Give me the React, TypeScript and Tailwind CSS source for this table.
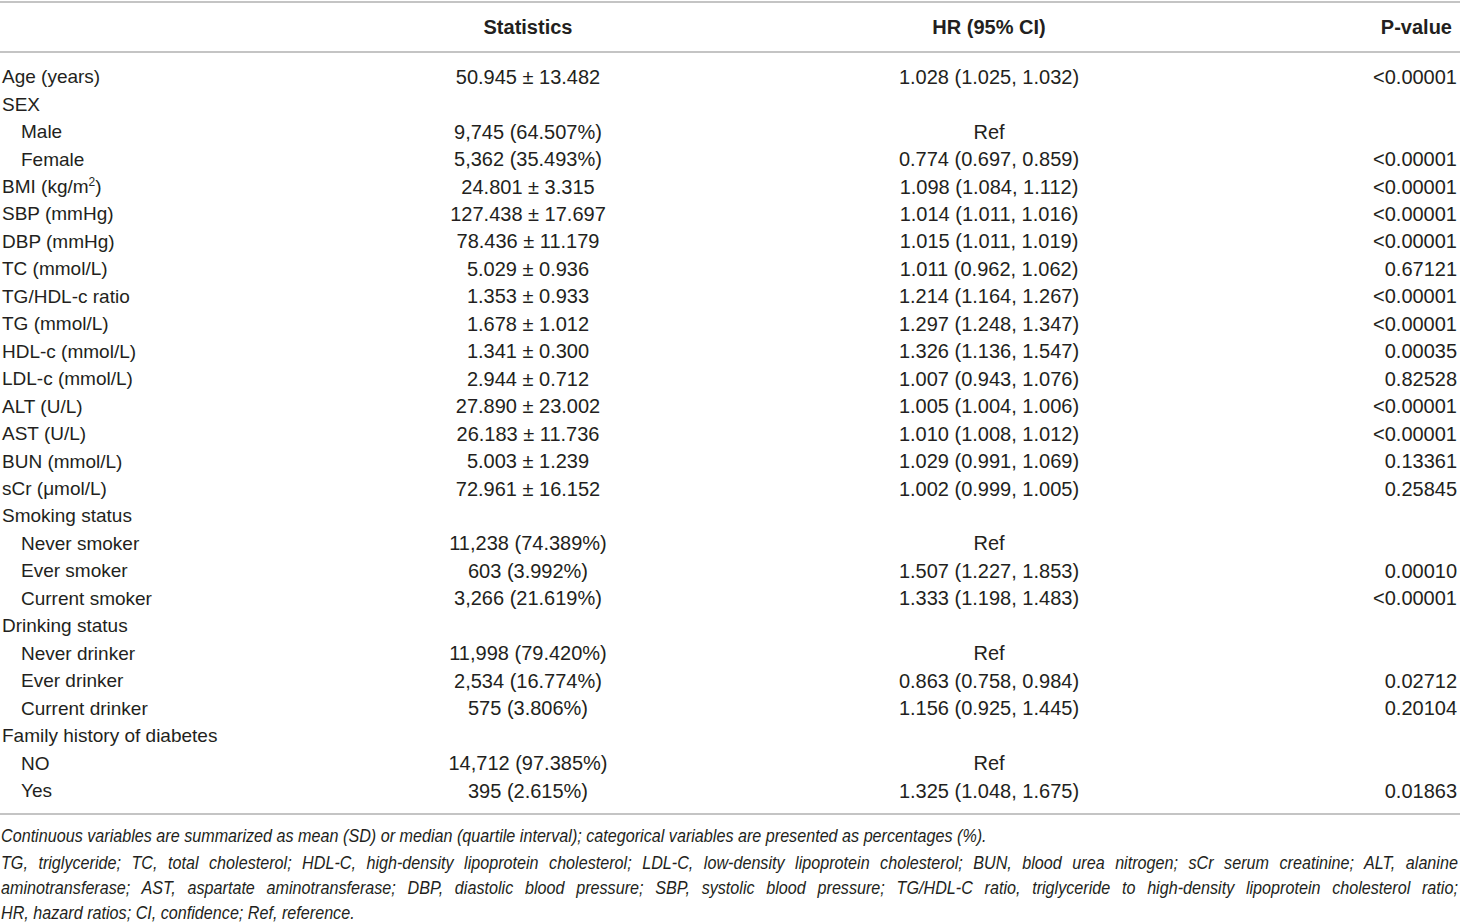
import React from "react";

type Row = {
  label: React.ReactNode;
  indent?: boolean;
  stat?: string;
  hr?: string;
  p?: string;
};

const rows: Row[] = [
  { label: "Age (years)", stat: "50.945 ± 13.482", hr: "1.028 (1.025, 1.032)", p: "<0.00001" },
  { label: "SEX" },
  { label: "Male", indent: true, stat: "9,745 (64.507%)", hr: "Ref" },
  { label: "Female", indent: true, stat: "5,362 (35.493%)", hr: "0.774 (0.697, 0.859)", p: "<0.00001" },
  {
    label: (
      <>
        BMI (kg/m<sup className="text-[12px] -top-[7px]">2</sup>)
      </>
    ),
    stat: "24.801 ± 3.315",
    hr: "1.098 (1.084, 1.112)",
    p: "<0.00001",
  },
  { label: "SBP (mmHg)", stat: "127.438 ± 17.697", hr: "1.014 (1.011, 1.016)", p: "<0.00001" },
  { label: "DBP (mmHg)", stat: "78.436 ± 11.179", hr: "1.015 (1.011, 1.019)", p: "<0.00001" },
  { label: "TC (mmol/L)", stat: "5.029 ± 0.936", hr: "1.011 (0.962, 1.062)", p: "0.67121" },
  { label: "TG/HDL-c ratio", stat: "1.353 ± 0.933", hr: "1.214 (1.164, 1.267)", p: "<0.00001" },
  { label: "TG (mmol/L)", stat: "1.678 ± 1.012", hr: "1.297 (1.248, 1.347)", p: "<0.00001" },
  { label: "HDL-c (mmol/L)", stat: "1.341 ± 0.300", hr: "1.326 (1.136, 1.547)", p: "0.00035" },
  { label: "LDL-c (mmol/L)", stat: "2.944 ± 0.712", hr: "1.007 (0.943, 1.076)", p: "0.82528" },
  { label: "ALT (U/L)", stat: "27.890 ± 23.002", hr: "1.005 (1.004, 1.006)", p: "<0.00001" },
  { label: "AST (U/L)", stat: "26.183 ± 11.736", hr: "1.010 (1.008, 1.012)", p: "<0.00001" },
  { label: "BUN (mmol/L)", stat: "5.003 ± 1.239", hr: "1.029 (0.991, 1.069)", p: "0.13361" },
  { label: "sCr (μmol/L)", stat: "72.961 ± 16.152", hr: "1.002 (0.999, 1.005)", p: "0.25845" },
  { label: "Smoking status" },
  { label: "Never smoker", indent: true, stat: "11,238 (74.389%)", hr: "Ref" },
  { label: "Ever smoker", indent: true, stat: "603 (3.992%)", hr: "1.507 (1.227, 1.853)", p: "0.00010" },
  { label: "Current smoker", indent: true, stat: "3,266 (21.619%)", hr: "1.333 (1.198, 1.483)", p: "<0.00001" },
  { label: "Drinking status" },
  { label: "Never drinker", indent: true, stat: "11,998 (79.420%)", hr: "Ref" },
  { label: "Ever drinker", indent: true, stat: "2,534 (16.774%)", hr: "0.863 (0.758, 0.984)", p: "0.02712" },
  { label: "Current drinker", indent: true, stat: "575 (3.806%)", hr: "1.156 (0.925, 1.445)", p: "0.20104" },
  { label: "Family history of diabetes" },
  { label: "NO", indent: true, stat: "14,712 (97.385%)", hr: "Ref" },
  { label: "Yes", indent: true, stat: "395 (2.615%)", hr: "1.325 (1.048, 1.675)", p: "0.01863" },
];

const cols = "grid grid-cols-[355px_346px_576px_1fr]";

// footnote font is a condensed italic; squeeze Liberation Sans horizontally
const note = "w-[1714px] origin-left scale-x-[0.85] whitespace-nowrap";

export default function App() {
  return (
    <div
      className="w-[1460px] h-[922px] bg-white text-[#231f20] overflow-hidden"
      style={{ fontFamily: '"Liberation Sans", Arial, sans-serif' }}
    >
      <div className="border-t-2 border-[#c4c4c4] mt-px" />
      <div className={`${cols} h-[48px] items-center text-[20px] font-bold`}>
        <div />
        <div className="text-center">Statistics</div>
        <div className="text-center">HR (95% CI)</div>
        <div className="text-right pr-[8px]">P-value</div>
      </div>
      <div className="border-t-2 border-[#c4c4c4]" />
      <div className="pt-[10px] pb-[9px]">
        {rows.map((r, i) => (
          <div key={i} className={`${cols} h-[27.46px] items-center leading-none`}>
            <div className={`text-[19px] ${r.indent ? "pl-[21px]" : "pl-[2px]"}`}>{r.label}</div>
            <div className="text-center text-[20px]">{r.stat}</div>
            <div className="text-center text-[20px]">{r.hr}</div>
            <div className="text-right text-[20px] pr-[3px]">{r.p}</div>
          </div>
        ))}
      </div>
      <div className="border-t-2 border-[#c4c4c4]" />
      <div className="italic text-[19px] pl-[1px] pt-[8px]">
        <p className={`${note} leading-[26px]`}>
          Continuous variables are summarized as mean (SD) or median (quartile interval); categorical variables are
          presented as percentages (%).
        </p>
        <p className={`${note} leading-[25px] mt-[1px] text-justify [text-align-last:justify]`}>
          TG, triglyceride; TC, total cholesterol; HDL-C, high-density lipoprotein cholesterol; LDL-C, low-density
          lipoprotein cholesterol; BUN, blood urea nitrogen; sCr serum creatinine; ALT, alanine
        </p>
        <p className={`${note} leading-[25px] text-justify [text-align-last:justify]`}>
          aminotransferase; AST, aspartate aminotransferase; DBP, diastolic blood pressure; SBP, systolic blood
          pressure; TG/HDL-C ratio, triglyceride to high-density lipoprotein cholesterol ratio;
        </p>
        <p className={`${note} leading-[25px]`}>HR, hazard ratios; CI, confidence; Ref, reference.</p>
      </div>
    </div>
  );
}
